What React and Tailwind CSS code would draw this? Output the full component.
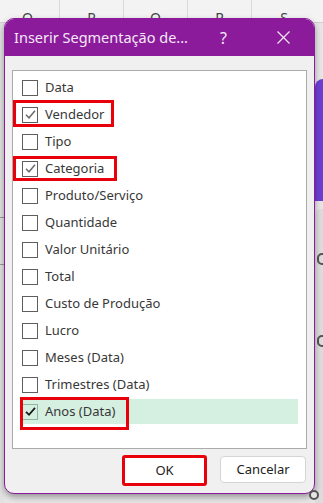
import React from "react";

const items = [
  { label: "Data" },
  { label: "Vendedor", checked: true },
  { label: "Tipo" },
  { label: "Categoria", checked: true },
  { label: "Produto/Serviço" },
  { label: "Quantidade" },
  { label: "Valor Unitário" },
  { label: "Total" },
  { label: "Custo de Produção" },
  { label: "Lucro" },
  { label: "Meses (Data)" },
  { label: "Trimestres (Data)" },
  { label: "Anos (Data)", checked: true, active: true },
];

const Check = ({ dark }) => (
  <svg width="13" height="13" viewBox="0 0 13 13" fill="none">
    <path
      d="M2 6.8 L5 9.8 L11 2.8"
      stroke={dark ? "#1a1a1a" : "#6b6b6b"}
      strokeWidth={dark ? "1.8" : "1.5"}
    />
  </svg>
);

const Row = ({ label, checked, active }) => (
  <div className="h-[27px] flex items-center">
    <div
      className={`flex-1 h-[25px] flex items-center ${active ? "bg-[#d5efe0]" : ""}`}
    >
      <div
        className={`w-[16px] h-[16px] border flex items-center justify-center ${
          active ? "border-[#8fb79f]" : "border-[#5e5e5e]"
        } ${active ? "bg-transparent" : "bg-white"}`}
      >
        {checked && <Check dark={active} />}
      </div>
      <span className="ml-[7px] text-[13px] text-[#383838]">{label}</span>
    </div>
  </div>
);

export default function App() {
  return (
    <div
      className="relative w-[323px] h-[503px] overflow-hidden bg-[#e6e6e6]"
      style={{ fontFamily: '"Noto Sans", "Open Sans", sans-serif' }}
    >
      {/* sheet behind the dialog */}
      <div className="flex h-[23px] -ml-[4px] bg-[#f3f3f3] border-b border-[#cfcfcf] text-[14px] text-[#444]">
        {["O", "P", "Q", "R", "S"].map((c, i) => (
          <div
            key={c}
            className={`w-[64px] flex justify-center pt-[7px] ${i < 4 ? "border-r border-[#dadada]" : ""}`}
          >
            {c}
          </div>
        ))}
      </div>
      <div className="flex justify-between h-[480px]">
        <div className="w-[4px] flex flex-col bg-[#e2e2e2]">
          <div className="h-[195px] border-b border-[#9a9a9a]" />
          <div className="h-[47px] border-b border-[#9a9a9a]" />
        </div>
        <div className="w-[8px] flex flex-col">
          <div className="h-[57px]" />
          <div className="h-[125px] bg-[#6b3fd4] rounded-tl-[8px]" />
          <div className="h-[8px]" />
          <div className="h-[300px] bg-[#dcdcdc] rounded-tl-[6px] relative">
            <div className="absolute left-[2px] top-[44px] w-[10px] h-[12px] rounded-full border-2 border-[#555]" />
            <div className="absolute left-[2px] top-[126px] w-[10px] h-[12px] rounded-full border-2 border-[#555]" />
          </div>
        </div>
      </div>

      {/* dialog */}
      <div className="absolute left-[4px] top-[18px] w-[311px] h-[476px] rounded-[10px] border border-[#8b1b9b] bg-[#f0f0f0] overflow-hidden flex flex-col shadow-[0_3px_6px_rgba(0,0,0,0.35)]">
        <div className="h-[37px] bg-[#8b1b9b] flex items-center text-[#f6e8f8]">
          <span className="ml-[9px] text-[14.5px] w-[206px]">Inserir Segmentação de...</span>
          <span className="text-[16px] w-[57px]">?</span>
          <svg width="13" height="13" viewBox="0 0 13 13">
            <path d="M0.5 0.5 L12.5 12.5 M12.5 0.5 L0.5 12.5" stroke="#f6e8f8" strokeWidth="1.2" />
          </svg>
        </div>
        <div className="px-[7px] pt-[14px]">
          <div className="h-[379px] border border-[#ababab] bg-white pt-[3px] pl-[9px] pr-[8px]">
            {items.map((it) => (
              <Row key={it.label} {...it} />
            ))}
          </div>
        </div>
        <div className="flex justify-end items-start gap-[13px] pr-[8px] mt-[6px] text-[13px] text-[#222]">
          <button className="w-[85px] h-[31px] bg-white border-[3px] border-[#e8000b] rounded-[3px]">
            OK
          </button>
          <button className="w-[86px] h-[27px] mt-[1px] bg-white border border-[#d4d4d4] rounded-[4px]">
            Cancelar
          </button>
        </div>
      </div>
      <div className="absolute left-[309px] top-[490px] w-[10px] h-[10px] rounded-full border-2 border-[#555] bg-[#e6e6e6]" />

      {/* red annotations */}
      <div className="absolute left-[13px] top-[100px] w-[101px] h-[27px] border-[3px] border-[#e8000b]" />
      <div className="absolute left-[13px] top-[156px] w-[104px] h-[25px] border-[3px] border-[#e8000b]" />
      <div className="absolute left-[20px] top-[397px] w-[109px] h-[33px] border-[3px] border-[#e8000b]" />
    </div>
  );
}
